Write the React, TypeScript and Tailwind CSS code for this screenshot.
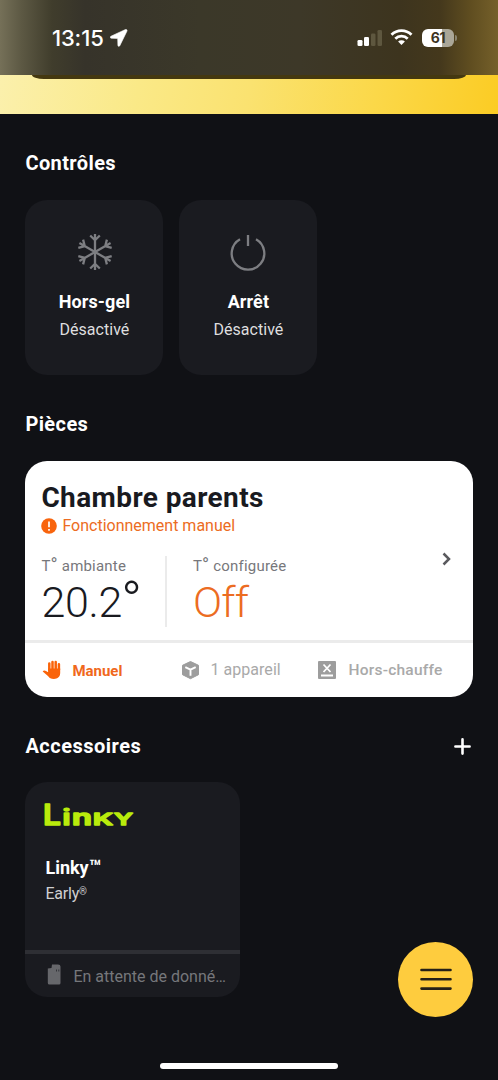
import React from 'react';

const StatusBar: React.FC = () => (
  <div className="h-[75px] flex items-center justify-between pl-[52px] pr-[41px] bg-[linear-gradient(90deg,#757058_0,#5c5843_22px,#403d2c_52px,#36332a_85px,#3b3829_200px,#3d3828_300px,#3d341e_400px,#44381c_440px,#5f4d20_470px,#75602a_498px)] text-white">
    <div className="flex items-center">
      <span className="text-[22px] leading-none font-medium font-['Inter',sans-serif] tracking-[-0.15px]">13:15</span>
      <svg className="ml-[6px]" width="18" height="18" viewBox="0 0 18 18" fill="#fff" stroke="#fff" strokeWidth="0.6">
        <path d="M15.5.5 1 7.200C-.2 7.800.1 9.200 1.200 9.200l6.500.2.2 6.800c0 1.300 1.300 1.600 1.900.5l7.200-14.700c.4-.9-.6-1.900-1.500-1.500Z" />
      </svg>
    </div>
    <div className="flex items-center">
      <svg width="26" height="18" viewBox="0 0 26 18">
        <rect x="0.5" y="11" width="5" height="6" rx="1.3" fill="#fff" />
        <rect x="7" y="8" width="5" height="9" rx="1.3" fill="#fff" />
        <rect x="14" y="4.5" width="4.5" height="12.5" rx="1.3" fill="#5e573f" />
        <rect x="20.5" y="1" width="4.5" height="16" rx="1.3" fill="#5e573f" />
      </svg>
      <svg className="ml-[7px]" width="23" height="17" viewBox="0 0 23 17" fill="none" stroke="#fff" strokeWidth="2.8">
        <path d="M1.500 5.700a14.200 14.200 0 0 1 20 0" />
        <path d="M5.300 9.700a8.800 8.800 0 0 1 12.400 0" />
        <path d="m11.500 16-3.400-3.400a4.800 4.800 0 0 1 6.800 0Z" fill="#fff" stroke="none" />
      </svg>
      <div className="ml-[9px] w-[32px] h-[18px] rounded-[6px] bg-[linear-gradient(90deg,#fff_61%,#aaa697_61%)] text-[#3d341e] text-[14px] font-bold font-['Inter',sans-serif] tracking-[-0.3px] flex items-center justify-center">
        61
      </div>
      <div className="ml-px w-[2px] h-[6px] rounded-r-full bg-[#8a8470]" />
    </div>
  </div>
);

interface ControlCardProps {
  icon: React.ReactNode;
  title: string;
  status: string;
}

const ControlCard: React.FC<ControlCardProps> = ({ icon, title, status }) => (
  <button type="button" className="w-[138px] h-[175px] rounded-[22px] bg-[#1a1b20] flex flex-col items-center pt-[33.4px]">
    <div className="h-[38px] flex items-center justify-center">{icon}</div>
    <div className="mt-[18.6px] text-[18px] leading-6 font-bold text-white tracking-[0.1px]">{title}</div>
    <div className="mt-1 text-[16px] leading-6 text-[#dededf] tracking-[0.05px]">{status}</div>
  </button>
);

const Snowflake = () => (
  <svg className="ml-px" width="38" height="38" viewBox="-19 -19 38 38" fill="none" stroke="#7d7e82" strokeWidth="2.3">
    {[0, 60, 120, 180, 240, 300].map((angle) => (
      <path key={angle} transform={`rotate(${angle})`} d="M0 0V-18M-4.800-16.500 0-11.800l4.800-4.700" />
    ))}
  </svg>
);

const Power = () => (
  <svg width="38" height="38" viewBox="0 0 38 38" fill="none" stroke="#7d7e82" strokeWidth="2.3">
    <path d="M19 2v11M11 6.200a16.300 16.300 0 1 0 16 0" />
  </svg>
);

const Hand = () => (
  <svg width="20" height="20" viewBox="0 0 20 20" fill="none" stroke="#fa640a" strokeLinecap="round">
    <path d="M7.300 10V3.400M10.500 10V2M13.700 10V2M16.900 10V4.200" strokeWidth="2.5" />
    <path d="M6.100 8.500h12.100v4.300c0 4-2.500 6.200-6.300 6.200-3 0-4.500-1-5.700-2.700L.7 11.500c.7-1.300 2.100-1.200 3.300-.5l2.100 1.300Z" fill="#fa640a" stroke="none" />
  </svg>
);

const Cube = () => (
  <svg width="19" height="20" viewBox="0 0 19 20">
    <path d="m9.500 1.500 8 3.800v9.400l-8 4-8-4V5.300Z" fill="#9d9d9d" stroke="#9d9d9d" strokeLinejoin="round" />
    <path d="m4.300 7.200 5.200 2.500 5.200-2.500M9.500 9.700v6" fill="none" stroke="#fff" strokeWidth="1.9" />
  </svg>
);

const HeatOff = () => (
  <svg width="18" height="18" viewBox="0 0 18 18">
    <rect width="18" height="18" rx="1" fill="#9d9d9d" />
    <path d="m5.500 3.500 7 7.500m0-7.500-7 7.500M3 14.500h12" stroke="#fff" strokeWidth="1.8" />
  </svg>
);

interface TemperatureProps {
  label: string;
  children: React.ReactNode;
}

const Temperature: React.FC<TemperatureProps> = ({ label, children }) => (
  <>
    <div className="-mt-px h-5 text-[15px] leading-5 text-[#77777b] tracking-[0.2px] whitespace-nowrap">
      T<span className="text-[19px] leading-none">°</span>{label}
    </div>
    <div className="mt-[3px] h-[48px] flex text-[43px] leading-[48px] font-light">{children}</div>
  </>
);

const RoomCard: React.FC = () => (
  <div className="mt-[24px] h-[236.5px] rounded-[22px] bg-white overflow-hidden flex flex-col">
    <div className="h-[179px] px-4 pt-[19px]">
      <div className="text-[28px] leading-[36px] font-bold text-[#191a1f] tracking-[0.4px]">Chambre parents</div>
      <div className="flex items-center text-[16px] leading-5 text-[#ec6c22]">
        <svg width="16" height="16" viewBox="0 0 16 16" className="mr-[5px]">
          <circle cx="8" cy="8" r="7.8" fill="#f8640d" />
          <path d="M8 3.500v5.800M8 11v1.800" stroke="#fff" strokeWidth="1.7" />
        </svg>
        <span>Fonctionnement manuel</span>
      </div>
      <div className="flex mt-5">
        <div className="w-[126px] h-[71px] border-r-2 border-[#ebebeb] text-[#191a1f]">
          <Temperature label=" ambiante">
            <span className="tracking-[-0.3px]">20.2</span>
            <span className="-ml-px text-[56px]">°</span>
          </Temperature>
        </div>
        <div className="pl-[25.5px] flex-1 text-[#ec6c22]">
          <Temperature label=" configurée">
            <span className="tracking-[-0.7px]">Off</span>
          </Temperature>
        </div>
        <svg className="mr-[5px] -mt-[4px]" width="10" height="14" viewBox="0 0 10 14" fill="none" stroke="#5a5a5e" strokeWidth="2.5">
          <path d="m1.500 1.500 5.500 5.500-5.500 5.500" />
        </svg>
      </div>
    </div>
    <div className="h-[3px] bg-[#ebebeb]" />
    <div className="flex-1 flex items-center pl-[17px] text-[16px] text-[#a9a9a9]">
      <div className="w-[139px] flex items-center gap-[10px] font-bold text-[#f0681c]">
        <Hand />
        <span className="relative top-px text-[15px]">Manuel</span>
      </div>
      <div className="w-[137px] flex items-center gap-[10px]">
        <Cube />
        <span className="tracking-[0.05px]">1 appareil</span>
      </div>
      <div className="flex items-center gap-3 font-medium">
        <HeatOff />
        <span className="relative top-px text-[15.5px] tracking-[0.25px]">Hors-chauffe</span>
      </div>
    </div>
  </div>
);

const LinkyLogo = () => (
  <svg className="ml-[18px] -mt-[6px] -mb-[6px]" width="94" height="36" viewBox="0 -6 94 36" fill="#b9eb0c" stroke="#b9eb0c" strokeWidth="1.4" strokeLinejoin="round" fontFamily="Inter, sans-serif" fontWeight="600">
    <text x="0" y="22" fontSize="28" textLength="18" lengthAdjust="spacingAndGlyphs">L</text>
    <text x="19.5" y="22" fontSize="21" textLength="8" lengthAdjust="spacingAndGlyphs">i</text>
    <text x="29" y="22" fontSize="21" textLength="20" lengthAdjust="spacingAndGlyphs">n</text>
    <text x="50" y="22" fontSize="16.5" textLength="20" lengthAdjust="spacingAndGlyphs">K</text>
    <text x="71" y="22" fontSize="16.5" textLength="19" lengthAdjust="spacingAndGlyphs">Y</text>
  </svg>
);

const AccessoryCard: React.FC = () => (
  <div className="mt-[23px] w-[215px] h-[215px] rounded-[22px] bg-[#1a1b20] overflow-hidden flex flex-col">
    <div className="h-[168px] pt-[21px]">
      <LinkyLogo />
      <div className="mt-[29px] pl-5 text-[18px] leading-6 font-bold text-white">
        Linky<span className="text-[20px] leading-none">™</span>
      </div>
      <div className="mt-[2px] pl-5 text-[16px] leading-6 text-[#cfcfd1] tracking-[-0.2px]">
        Early<span className="relative -top-[4px] text-[10px] leading-none">®</span>
      </div>
    </div>
    <div className="h-[4px] bg-[#2e2f34]" />
    <div className="flex-1 flex items-center pl-[22px] pb-0.5 text-[16px] text-[#76777b]">
      <svg width="14" height="21" viewBox="0 0 14 21" fill="#66676b">
        <path d="M5 .5h6q2.500 0 2.500 2V19q0 1.500-1.500 1.500H2.500Q.8 20.500.8 19V4.500L4.500 4Z" />
        <path d="M9.500 5.500v2M11.800 5.500v2" stroke="#333439" />
      </svg>
      <span className="ml-3 relative top-[3px]">En attente de donné…</span>
    </div>
  </div>
);

export default function App() {
  return (
    <div className="w-[498px] h-[1080px] relative overflow-hidden bg-[#101115] font-['Roboto',sans-serif]">
      <StatusBar />
      <div className="h-[39px] px-8 bg-[linear-gradient(100deg,#fbf0ac_0%,#fae987_28%,#fae270_50%,#fbd849_75%,#fbcc24_100%)]">
        <div className="h-1 [border-radius:0_0_12px_12px/0_0_4px_4px] bg-[#443810]" />
      </div>
      <main className="px-[25.4px] pt-[36.6px]">
        <h2 className="text-[20px] leading-[25px] font-bold text-white tracking-[0.4px]">Contrôles</h2>
        <div className="flex gap-4 mt-[24px]">
          <ControlCard icon={<Snowflake />} title="Hors-gel" status="Désactivé" />
          <ControlCard icon={<Power />} title="Arrêt" status="Désactivé" />
        </div>
        <h2 className="mt-[37px] text-[20px] leading-[25px] font-bold text-white tracking-[0.4px]">Pièces</h2>
        <RoomCard />
        <div className="mt-[36.5px] flex items-center justify-between">
          <h2 className="text-[20px] leading-[25px] font-bold text-white tracking-[0.5px]">Accessoires</h2>
          <svg className="mr-[2px]" width="17" height="17" viewBox="0 0 17 17" stroke="#fff" strokeWidth="2.6" strokeLinecap="round">
            <path d="M8.500 1.400v14.200M1.400 8.500h14.200" />
          </svg>
        </div>
        <AccessoryCard />
      </main>
      <button type="button" className="absolute left-[398px] top-[942px] w-[75px] h-[75px] rounded-full bg-[#fecc3e] flex items-center justify-center">
        <svg width="32" height="23" viewBox="0 0 32 23" stroke="#252017" strokeWidth="2.6" strokeLinecap="round">
          <path d="M1.500 2h29M1.500 11.300h29M1.500 20.600h29" />
        </svg>
      </button>
      <div className="absolute left-[160px] top-[1063px] w-[178px] h-[6px] rounded-full bg-white" />
    </div>
  );
}
